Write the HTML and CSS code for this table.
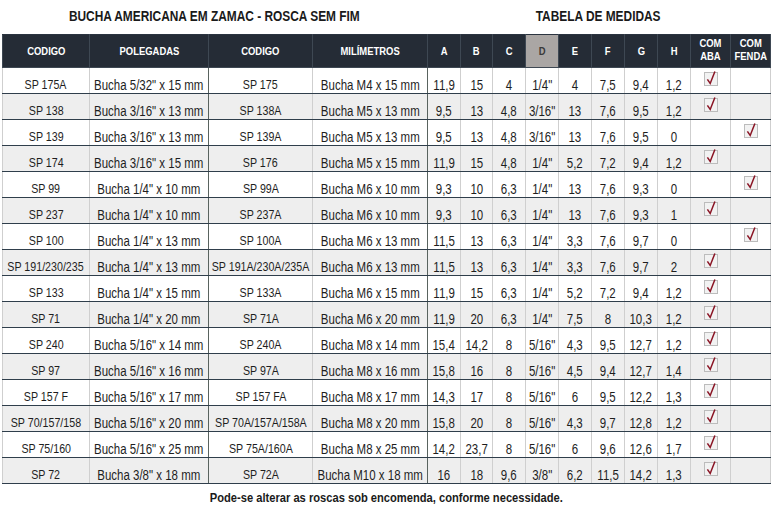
FILE: index.html
```html
<!DOCTYPE html>
<html lang="pt">
<head>
<meta charset="utf-8">
<title>Bucha Americana em Zamac</title>
<link rel="stylesheet" href="styles.css">
</head>
<body>
<div class="page">
  <div class="titles">
    <div class="title title-left"><span class="t">BUCHA AMERICANA EM ZAMAC - ROSCA SEM FIM</span></div>
    <div class="title title-right"><span class="t">TABELA DE MEDIDAS</span></div>
  </div>
  <table class="grid">
    <colgroup>
      <col class="w-cod1"><col class="w-pol"><col class="w-cod2"><col class="w-mil">
      <col class="w-a"><col class="w-b"><col class="w-n"><col class="w-n"><col class="w-n"><col class="w-n"><col class="w-n"><col class="w-n">
      <col class="w-chk"><col class="w-chk">
    </colgroup>
    <thead>
      <tr>
        <th><span class="t">CODIGO</span></th>
        <th class="grp"><span class="t">POLEGADAS</span></th>
        <th><span class="t">CODIGO</span></th>
        <th class="grp"><span class="t">MILÍMETROS</span></th>
        <th><span class="t">A</span></th><th><span class="t">B</span></th><th><span class="t">C</span></th>
        <th class="hd-d"><span class="t">D</span></th>
        <th><span class="t">E</span></th><th><span class="t">F</span></th><th><span class="t">G</span></th><th><span class="t">H</span></th>
        <th class="two"><span class="t">COM<br>ABA</span></th>
        <th class="two"><span class="t">COM<br>FENDA</span></th>
      </tr>
    </thead>
    <tbody id="rows"></tbody>
  </table>
  <p class="note"><span class="t">Pode-se alterar as roscas sob encomenda, conforme necessidade.</span></p>
</div>
<script src="app.js"></script>
</body>
</html>
```

FILE: app.js
```js
var data = [
  ["SP 175A","Bucha 5/32\" x 15 mm","SP 175","Bucha M4 x 15 mm","11,9","15","4","1/4\"","4","7,5","9,4","1,2","a"],
  ["SP 138","Bucha 3/16\" x 13 mm","SP 138A","Bucha M5 x 13 mm","9,5","13","4,8","3/16\"","13","7,6","9,5","1,2","a"],
  ["SP 139","Bucha 3/16\" x 13 mm","SP 139A","Bucha M5 x 13 mm","9,5","13","4,8","3/16\"","13","7,6","9,5","0","f"],
  ["SP 174","Bucha 3/16\" x 15 mm","SP 176","Bucha M5 x 15 mm","11,9","15","4,8","1/4\"","5,2","7,2","9,4","1,2","a"],
  ["SP 99","Bucha 1/4\" x 10 mm","SP 99A","Bucha M6 x 10 mm","9,3","10","6,3","1/4\"","13","7,6","9,3","0","f"],
  ["SP 237","Bucha 1/4\" x 10 mm","SP 237A","Bucha M6 x 10 mm","9,3","10","6,3","1/4\"","13","7,6","9,3","1","a"],
  ["SP 100","Bucha 1/4\" x 13 mm","SP 100A","Bucha M6 x 13 mm","11,5","13","6,3","1/4\"","3,3","7,6","9,7","0","f"],
  ["SP 191/230/235","Bucha 1/4\" x 13 mm","SP 191A/230A/235A","Bucha M6 x 13 mm","11,5","13","6,3","1/4\"","3,3","7,6","9,7","2","a"],
  ["SP 133","Bucha 1/4\" x 15 mm","SP 133A","Bucha M6 x 15 mm","11,9","15","6,3","1/4\"","5,2","7,2","9,4","1,2","a"],
  ["SP 71","Bucha 1/4\" x 20 mm","SP 71A","Bucha M6 x 20 mm","11,9","20","6,3","1/4\"","7,5","8","10,3","1,2","a"],
  ["SP 240","Bucha 5/16\" x 14 mm","SP 240A","Bucha M8 x 14 mm","15,4","14,2","8","5/16\"","4,3","9,5","12,7","1,2","a"],
  ["SP 97","Bucha 5/16\" x 16 mm","SP 97A","Bucha M8 x 16 mm","15,8","16","8","5/16\"","4,5","9,4","12,7","1,4","a"],
  ["SP 157 F","Bucha 5/16\" x 17 mm","SP 157 FA","Bucha M8 x 17 mm","14,3","17","8","5/16\"","6","9,5","12,2","1,3","a"],
  ["SP 70/157/158","Bucha 5/16\" x 20 mm","SP 70A/157A/158A","Bucha M8 x 20 mm","15,8","20","8","5/16\"","4,3","9,7","12,8","1,2","a"],
  ["SP 75/160","Bucha 5/16\" x 25 mm","SP 75A/160A","Bucha M8 x 25 mm","14,2","23,7","8","5/16\"","6","9,6","12,6","1,7","a"],
  ["SP 72","Bucha 3/8\" x 18 mm","SP 72A","Bucha M10 x 18 mm","16","18","9,6","3/8\"","6,2","11,5","14,2","1,3","a"]
];
var box = '<svg class="cb" width="14" height="16" viewBox="0 0 14 16"><rect x="0.5" y="2.5" width="13" height="13" fill="#f2f2f2" stroke="#bcbcbc"/><path d="M3.4 9.4 L6.2 13.4 L10.9 1.4" fill="none" stroke="#8a1424" stroke-width="1.5" stroke-linejoin="miter"/></svg>';
function cell(cls, text) {
  return '<td class="' + cls + '"><span class="t">' + text + "</span></td>";
}
var html = "";
data.forEach(function (r) {
  html += "<tr>";
  html += cell("code", r[0]);
  html += cell("desc grp", r[1]);
  html += cell("code", r[2]);
  html += cell("desc grp", r[3]);
  for (var i = 4; i < 12; i++) html += cell("num", r[i]);
  html += '<td class="chk">' + (r[12] === "a" ? box : "") + "</td>";
  html += '<td class="chk">' + (r[12] === "f" ? box : "") + "</td>";
  html += "</tr>";
});
document.getElementById("rows").innerHTML = html;
```

FILE: styles.css
```css
html, body {
  margin: 0;
  padding: 0;
  background: #ffffff;
}
body {
  font-family: "Liberation Sans", Arial, sans-serif;
  color: #1e1e1e;
}
/* Arial Narrow substitute: Liberation Sans condensed horizontally */
.t {
  display: inline-block;
  margin: 0 -40px;
  transform: scaleX(0.82);
  transform-origin: 50% 50%;
  white-space: nowrap;
}
.page {
  width: 772px;
  padding-left: 2px;
  box-sizing: border-box;
}
.titles {
  display: flex;
  height: 34px;
  box-sizing: border-box;
  padding-top: 7px;
}
.title {
  font-weight: bold;
  font-size: 14.5px;
  line-height: 18px;
  text-align: center;
  color: #1a1a1a;
}
.title-left { width: 425px; }
.title-right { width: 343px; }

.grid {
  border-collapse: collapse;
  table-layout: fixed;
  width: 768px;
  border: 1px solid #2b3440;
}
.w-cod1 { width: 87px; }
.w-pol { width: 119px; }
.w-cod2 { width: 104px; }
.w-mil { width: 115px; }
.w-a { width: 33px; }
.w-b { width: 32px; }
.w-n { width: 33px; }
.w-chk { width: 40px; }

.grid thead tr {
  height: 33px;
}
.grid th {
  background: #252c36;
  color: #ffffff;
  font-weight: bold;
  font-size: 11.5px;
  line-height: 13px;
  padding: 0;
  text-align: center;
  vertical-align: middle;
  border: 1px solid #3e4853;
  border-top-color: #2b3440;
}
.grid th.hd-d {
  background: #aaa6a4;
  color: #3a3a3a;
}
.grid th.two {
  vertical-align: top;
  padding-top: 2px;
}
.grid th.two .t {
  margin: 0 -20px;
}
.grid tbody tr {
  height: 26px;
}
.grid tbody tr:nth-child(even) td {
  background: #eeeeee;
}
.grid td {
  padding: 0;
  font-size: 14px;
  line-height: 16px;
  text-align: center;
  vertical-align: bottom;
  white-space: nowrap;
  border-top: 1px solid #2f3e4b;
  border-bottom: 1px solid #2f3e4b;
  border-left: 1px solid #cfcfcf;
  border-right: 1px solid #cfcfcf;
  color: #1e1e1e;
}
.grid td.code { font-size: 13px; }
.grid td.desc { font-size: 14px; }
.grid td.grp { border-right: 1px solid #59635f; }
.grid td.chk {
  vertical-align: top;
  padding-top: 2px;
  line-height: 0;
}
.cb { display: inline-block; }
.note {
  margin: 6px 0 0;
  width: 768px;
  text-align: center;
  font-weight: bold;
  font-size: 13.6px;
  line-height: 16px;
  color: #1a1a1a;
}
```
